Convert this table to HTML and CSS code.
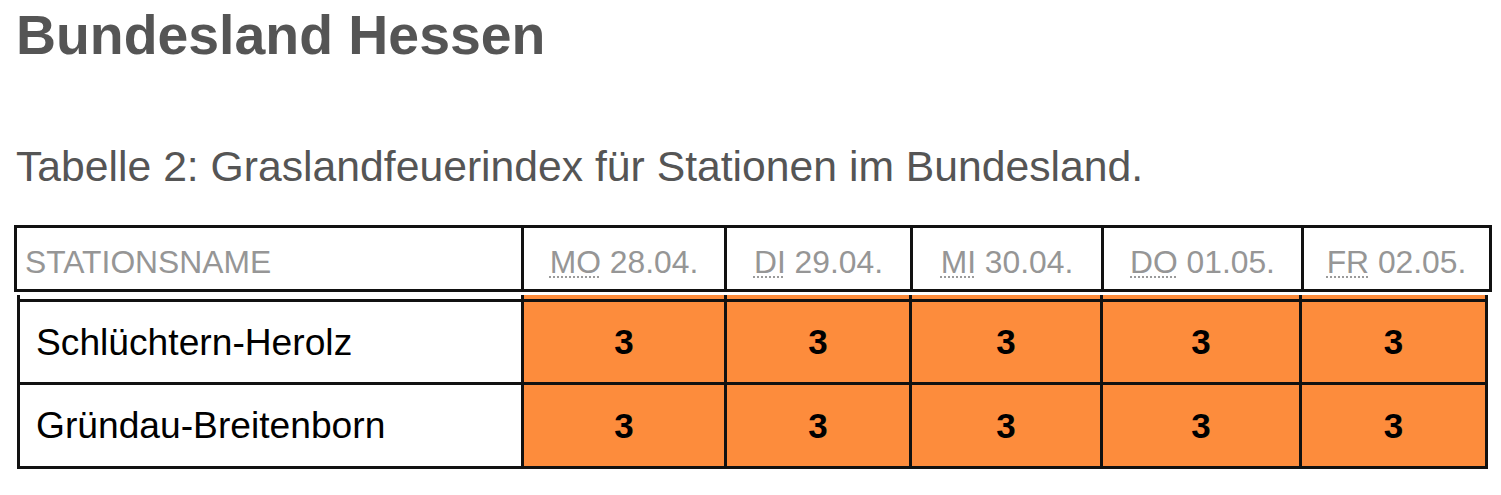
FILE: index.html
```html
<!DOCTYPE html>
<html lang="de">
<head>
<meta charset="utf-8">
<title>Bundesland Hessen</title>
<link rel="stylesheet" href="styles.css">
</head>
<body>
<h1 class="title">Bundesland Hessen</h1>
<p class="caption">Tabelle 2: Graslandfeuerindex für Stationen im Bundesland.</p>
<table class="head-table">
  <thead>
    <tr>
      <th class="c-name">STATIONSNAME</th>
      <th class="c-mo"><abbr title="Montag">MO</abbr> 28.04.</th>
      <th class="c-di"><abbr title="Dienstag">DI</abbr> 29.04.</th>
      <th class="c-mi"><abbr title="Mittwoch">MI</abbr> 30.04.</th>
      <th class="c-do"><abbr title="Donnerstag">DO</abbr> 01.05.</th>
      <th class="c-fr last"><abbr title="Freitag">FR</abbr> 02.05.</th>
    </tr>
  </thead>
</table>
<table class="body-table">
  <tbody>
    <tr class="first">
      <td class="name b-name">Schlüchtern-Herolz</td>
      <td class="val b-mo">3</td>
      <td class="val b-di">3</td>
      <td class="val b-mi">3</td>
      <td class="val b-do">3</td>
      <td class="val b-fr last">3</td>
    </tr>
    <tr>
      <td class="name b-name">Gründau-Breitenborn</td>
      <td class="val b-mo">3</td>
      <td class="val b-di">3</td>
      <td class="val b-mi">3</td>
      <td class="val b-do">3</td>
      <td class="val b-fr last">3</td>
    </tr>
  </tbody>
</table>
</body>
</html>
```
FILE: styles.css
```css
html, body {
  margin: 0;
  padding: 0;
  background: #fff;
}
body {
  font-family: "Liberation Sans", Arial, sans-serif;
  padding-left: 14px;
}
.title {
  margin: 3px 0 0 2px;
  font-size: 55.4px;
  line-height: 64px;
  font-weight: bold;
  color: #555;
}
.caption {
  margin: 75px 0 0 2px;
  font-size: 42.7px;
  line-height: 48px;
  color: #555;
}
.head-table {
  margin-top: 35px;
  border-collapse: separate;
  border-spacing: 0;
  table-layout: fixed;
  width: 1478px;
  border: 3px solid #111;
}
.head-table th {
  box-sizing: border-box;
  height: 61px;
  padding: 7px 0 0;
  border-right: 3px solid #111;
  border-bottom: 0;
  font-size: 31.8px;
  font-weight: normal;
  color: #969696;
  text-align: center;
  vertical-align: middle;
}
.head-table th.last { border-right: 0; }
.head-table th.c-name { width: 507px; text-align: left; padding-left: 8px; }
.head-table th.c-mo { width: 203px; }
.head-table th.c-di { width: 186px; }
.head-table th.c-mi { width: 191px; }
.head-table th.c-do { width: 200px; }
.head-table th.c-fr { width: 185px; }
abbr[title] {
  text-decoration: underline dotted;
  text-decoration-thickness: 2px;
  text-underline-offset: 4px;
  text-decoration-color: #9a9a9a;
}
.body-table {
  margin: 3px 0 0 3px;
  border-collapse: separate;
  border-spacing: 0;
  table-layout: fixed;
  width: 1471px;
  border-left: 3px solid #111;
  border-right: 3px solid #111;
}
.body-table td {
  box-sizing: border-box;
  height: 84px;
  padding: 0;
  border-right: 3px solid #111;
  border-bottom: 3px solid #111;
  vertical-align: middle;
}
.body-table td.last { border-right: 0; }
.body-table tr.first td {
  height: 90px;
  padding-top: 7px;
  background-image: linear-gradient(#111, #111);
  background-position: 0 4px;
  background-size: 100% 3px;
  background-repeat: no-repeat;
}
.body-table td.b-name { width: 504px; }
.body-table td.b-mo { width: 203px; }
.body-table td.b-di { width: 185px; }
.body-table td.b-mi { width: 191px; }
.body-table td.b-do { width: 199px; }
.body-table td.b-fr { width: 183px; }
.body-table td.name {
  padding-left: 16px;
  font-size: 37.2px;
  color: #000;
  background-color: #fff;
}
.val {
  background-color: #fd8c3c;
  text-align: center;
  font-size: 35px;
  font-weight: bold;
  color: #000;
}
```
